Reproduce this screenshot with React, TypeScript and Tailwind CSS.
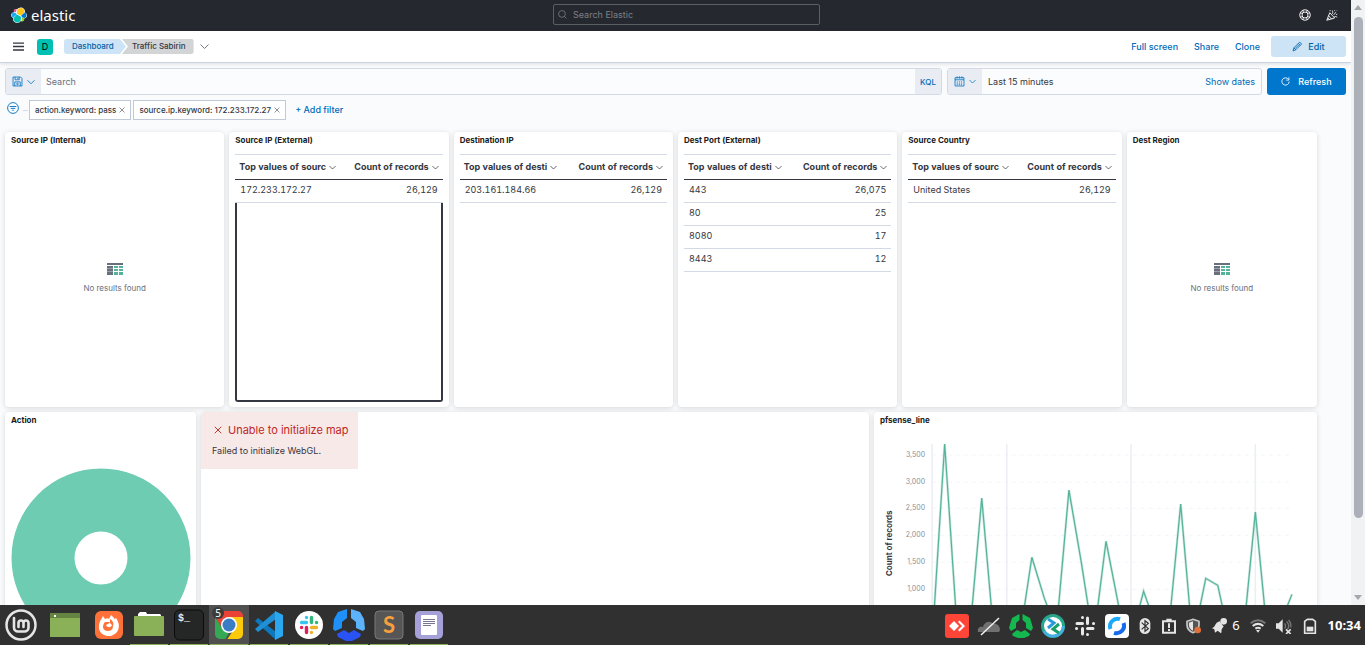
import type { ReactNode } from "react";

interface TablePanel {
  title: string;
  column?: string;
  rows: [string, string][];
  focused?: boolean;
}

const tablePanels: TablePanel[] = [
  { title: "Source IP (Internal)", rows: [] },
  { title: "Source IP (External)", column: "Top values of sourc", rows: [["172.233.172.27", "26,129"]], focused: true },
  { title: "Destination IP", column: "Top values of desti", rows: [["203.161.184.66", "26,129"]] },
  {
    title: "Dest Port (External)",
    column: "Top values of desti",
    rows: [
      ["443", "26,075"],
      ["80", "25"],
      ["8080", "17"],
      ["8443", "12"],
    ],
  },
  { title: "Source Country", column: "Top values of sourc", rows: [["United States", "26,129"]] },
  { title: "Dest Region", rows: [] },
];

const yTicks = [
  { label: "3,500", y: 455 },
  { label: "3,000", y: 482 },
  { label: "2,500", y: 508 },
  { label: "2,000", y: 535 },
  { label: "1,500", y: 562 },
  { label: "1,000", y: 589 },
];

const linePoints =
  "933,642 945.5,444 958,630 970,640 982.5,498 995,640 1008,641 1020,640 1032.5,557 1045,598 1057,630 1069.5,490 1082,563 1094,640 1106.5,541 1119,605 1131,640 1144,591 1156,625 1168,640 1181,504 1193,642 1206,578 1218,585 1230,640 1243,640 1255.5,512 1268,640 1280,624 1292,594";

/* ---------- icons ---------- */

function ElasticLogo() {
  return (
    <svg viewBox="0 0 32 32" className="size-4" aria-hidden="true">
      <path fill="#fff" d="M32 16.800c0-2.700-1.600-5-4.100-6C28.800 5.700 25 1 19.800 1c-3 0-5.700 1.400-7.400 3.800-2.400-1.900-6.200-.1-6.200 3 0 .6.1 1.200.3 1.700C2.300 11 .1 13.200.1 16.200c0 2.700 1.700 5 4.200 6C3 27.500 7 32 12.300 32c3 0 5.700-1.500 7.400-3.900 2.400 1.900 6.100.2 6.100-3 0-.6-.1-1.200-.3-1.700 3.500-.9 6.500-3.300 6.500-6.600z" />
      <path fill="#FEC514" d="M12.600 13.800l7 3.200 7.100-6.200C27.500 5.800 24.300 2 19.800 2c-2.700 0-5.200 1.300-6.700 3.500l-1.200 6.100z" />
      <path fill="#00BFB3" d="M5.300 22.200c-.9 4.800 2.600 8.800 7 8.800 2.700 0 5.200-1.300 6.700-3.600l1.200-6-1.600-3-7-3.200z" />
      <path fill="#F04E98" d="M5.300 9.200l4.800 1.100 1-5.400C8.500 2.900 4.300 5.600 5.300 9.200z" />
      <path fill="#1BA9F5" d="M4.900 10.300C2.700 11.100 1 13.500 1 16s1.500 4.500 3.700 5.300l6.700-6.100-1.200-2.700z" />
      <path fill="#93C90E" d="M20.900 27.400c2.500 1.900 6.800-.7 5.800-4.300l-4.800-1.100z" />
      <path fill="#07C" d="M21.900 20.800l5.200 1.200c2.200-.8 3.900-3.100 3.900-5.600s-1.500-4.500-3.700-5.300l-6.900 6z" />
    </svg>
  );
}

function LineIcon({ className, children }: { className: string; children: ReactNode }) {
  return (
    <svg viewBox="0 0 16 16" fill="none" stroke="currentColor" strokeWidth="1.200" className={className} aria-hidden="true">
      {children}
    </svg>
  );
}

function Chevron({ className }: { className: string }) {
  return (
    <LineIcon className={className}>
      <path strokeWidth="1.700" d="M1 4.500l7 7 7-7" />
    </LineIcon>
  );
}

function Cross({ className }: { className: string }) {
  return (
    <LineIcon className={className}>
      <path strokeWidth="1.800" d="M1.500 1.500l13 13M14.500 1.500l-13 13" />
    </LineIcon>
  );
}

function HelpIcon() {
  return (
    <LineIcon className="size-3">
      <circle cx="8" cy="8" r="7" />
      <circle cx="8" cy="8" r="4" />
      <path d="M5.500 1.700v3M10.500 1.700v3M5.500 11.300v3M10.500 11.300v3M1.700 5.500h3M11.300 5.500h3M1.700 10.500h3M11.300 10.500h3" />
    </LineIcon>
  );
}

function CheerIcon() {
  return (
    <LineIcon className="size-3">
      <path d="M1 15L5 5l6.500 7zM3.500 9l4 4.500M2.500 12l2 2M8 6.500c1.500-1 1-3 .5-4.500M10 8c1.500-1 1.500-3 3.500-3.500M11 10.500c1.500-.8 2.500-.5 4 .5M11 2.500l1-1M5.500 1.500v1.500M13.500 7.500l1.500-.5M14 1.500l.5.500" />
    </LineIcon>
  );
}

function DiskIcon() {
  return (
    <LineIcon className="size-[11px]">
      <path d="M1.500 1.500h11l2 2v11h-13zM4.500 1.500v4h6v-4M8.500 2.500v2M4 14.500v-6h8v6" />
      <circle cx="8" cy="11.500" r="1.200" />
    </LineIcon>
  );
}

function CalendarIcon() {
  return (
    <LineIcon className="size-[11px]">
      <path d="M1.500 2.500h13v12h-13zM1.500 5.500h13M4.500.5v3M8 .5v3M11.500.5v3" />
      <path strokeDasharray="1.500 1.500" d="M4 8.500h9M4 10.500h9M4 12.500h9" />
    </LineIcon>
  );
}

function FilterIcon() {
  return (
    <LineIcon className="size-3">
      <circle cx="8" cy="8" r="7.200" />
      <path d="M3.500 6h9M5 8.500h6M7 11h2" />
    </LineIcon>
  );
}

function PencilIcon() {
  return (
    <LineIcon className="size-[11px]">
      <path d="M1.500 14.500l1.200-4.500 8-8c.8-.8 3.600 2 2.800 2.800l-8 8zM2.700 10l2.800 2.800M9.200 3.500L12 6.300M4.500 11l6-6" />
    </LineIcon>
  );
}

function RefreshIcon() {
  return (
    <LineIcon className="size-[9px]">
      <path strokeWidth="1.500" d="M13.500 4.500A6.500 6.500 0 1 0 14.500 8M14 .5v5H9" />
    </LineIcon>
  );
}

function TableIcon() {
  return (
    <svg viewBox="0 0 16 12" className="h-3 w-4" aria-hidden="true">
      <path fill="#69707D" d="M0 0h16v2H0zM0 3h6v2H0zM0 6h6v2H0zM0 9h6v3H0z" />
      <path fill="#98a0aa" d="M0 5h6v1H0zM0 8h6v1H0z" />
      <path fill="#54B399" d="M7 3h4v2H7zM12 3h4v2h-4zM7 6h4v2H7zM12 6h4v2h-4zM7 9h4v3H7zM12 9h4v3h-4z" />
    </svg>
  );
}

/* ---------- header ---------- */

function TopBar() {
  return (
    <header className="grid h-[31px] shrink-0 grid-cols-[553fr_267fr_531fr] items-center bg-[#25282f] pb-[2px]">
      <a href="#" className="flex items-center gap-1 pl-[11px] font-['Noto_Sans'] text-[15px] leading-5 text-white">
        <ElasticLogo />
        elastic
      </a>
      <label className="flex h-[21px] items-center gap-[6px] rounded-[2px] border border-[#5b5e65] px-1 text-[#8b8e95]">
        <LineIcon className="size-[9px]">
          <circle cx="7" cy="7" r="6" />
          <path d="M11.500 11.500L15 15" />
        </LineIcon>
        <input
          type="text"
          aria-label="Search Elastic"
          placeholder="Search Elastic"
          className="min-w-0 flex-1 bg-transparent text-[9px] outline-none placeholder:text-[#7d8087]"
        />
      </label>
      <div className="flex justify-end gap-[15px] pr-[13px] text-white">
        <button aria-label="Help"><HelpIcon /></button>
        <button aria-label="What's new"><CheerIcon /></button>
      </div>
    </header>
  );
}

function NavBar() {
  return (
    <nav className="relative flex h-8 shrink-0 items-center border-b border-[#c9d3e3] bg-white pr-[5px] pl-[13px] shadow-[0_1px_4px_rgba(0,0,0,0.12)]">
      <button aria-label="Menu" className="text-[#343741]">
        <LineIcon className="size-[11px]">
          <path strokeWidth="2" d="M0 3h16M0 8h16M0 13h16" />
        </LineIcon>
      </button>
      <span className="ml-[13px] flex size-4 items-center justify-center rounded-[3px] bg-[#00bfb3] text-[9px] text-black">D</span>
      <div className="ml-[11px] flex h-[15px] text-[8px] leading-[15px] font-medium">
        <a href="#" className="w-[62px] rounded-l-[3px] bg-[#cce4f5] pl-2 text-[#0061a6] [clip-path:polygon(0_0,56px_0,100%_50%,56px_100%,0_100%)]">
          Dashboard
        </a>
        <span className="-ml-1 rounded-r-[3px] bg-[#d3d4d6] pr-2 pl-[10px] text-[#343741] [clip-path:polygon(0_0,100%_0,100%_100%,0_100%,6px_50%)]">
          Traffic Sabirin
        </span>
      </div>
      <Chevron className="ml-[6px] size-[9px] text-[#69707d]" />
      <div className="ml-auto flex items-center gap-4 text-[9px] font-medium text-[#006bb8]">
        <a href="#">Full screen</a>
        <a href="#">Share</a>
        <a href="#">Clone</a>
        <button className="-ml-[5px] flex h-[21px] w-[75px] items-center justify-center gap-[5px] rounded-[3px] bg-[#cce4f5] text-[#0061a6]">
          <PencilIcon />
          Edit
        </button>
      </div>
    </nav>
  );
}

function QueryBar() {
  return (
    <div className="flex h-[27px] shrink-0 gap-[5px] px-[5px] text-[9px]">
      <div className="flex min-w-0 flex-1 overflow-hidden rounded-[3px] border border-[#d3dae6] bg-[#fbfcfd]">
        <button aria-label="Saved queries" className="flex w-[35px] items-center justify-center gap-1 bg-[#e9edf3] text-[#0071c2]">
          <DiskIcon />
          <Chevron className="size-2" />
        </button>
        <input type="text" aria-label="Search" placeholder="Search" className="min-w-0 flex-1 bg-transparent px-[5px] outline-none placeholder:text-[#69707d]" />
        <button className="w-[26px] bg-[#e9edf3] text-[8px] font-medium text-[#006bb8]">KQL</button>
      </div>
      <div className="flex w-[315px] overflow-hidden rounded-[3px] border border-[#d3dae6] bg-[#fbfcfd]">
        <button aria-label="Quick select" className="flex w-[34px] items-center justify-center gap-1 bg-[#e9edf3] text-[#0071c2]">
          <CalendarIcon />
          <Chevron className="size-[7px]" />
        </button>
        <button className="flex flex-1 items-center justify-between px-[6px] text-[#343741]">
          Last 15 minutes
          <span className="text-[#006bb8]">Show dates</span>
        </button>
      </div>
      <button className="flex w-[79px] items-center justify-center gap-2 rounded-[3px] bg-[#0077cc] font-medium text-white">
        <RefreshIcon />
        Refresh
      </button>
    </div>
  );
}

function FilterBar() {
  const filters = ["action.keyword: pass", "source.ip.keyword: 172.233.172.27"];
  return (
    <div className="mt-[5px] flex h-5 shrink-0 items-center pl-[7px] text-[8px]">
      <button aria-label="Filter options" className="mb-1 text-[#0071c2]">
        <FilterIcon />
      </button>
      <span className="mr-px ml-1 h-px w-[5px] bg-[#d3dae6]" />
      {filters.map((f) => (
        <span key={f} className="mr-[2px] flex h-5 items-center gap-[3px] border border-[#c2c9d6] bg-white px-[5px] font-medium text-[#343741]">
          {f}
          <button aria-label={`Remove ${f}`} className="text-[#535966]">
            <Cross className="size-[6px]" />
          </button>
        </span>
      ))}
      <button className="ml-[7px] text-[9px] font-medium text-[#006bb8]">+ Add filter</button>
    </div>
  );
}

/* ---------- panels ---------- */

function Panel({ title, children }: { title?: string; children?: ReactNode }) {
  return (
    <section className="flex h-[275px] min-w-0 flex-col overflow-hidden rounded-[4px] bg-white shadow-[0_1px_5px_rgba(0,0,0,0.15)]">
      {title && <h2 className="h-[22px] shrink-0 px-[6px] text-[8px] leading-4 font-bold text-[#1a1c21]">{title}</h2>}
      {children}
    </section>
  );
}

function DataPanel({ panel }: { panel: TablePanel }) {
  if (!panel.column) {
    return (
      <Panel title={panel.title}>
        <div className="flex flex-1 flex-col items-center justify-center gap-[7px] pb-1 text-[8px] leading-3 text-[#69707d]">
          <TableIcon />
          No results found
        </div>
      </Panel>
    );
  }

  return (
    <Panel title={panel.title}>
      <div className="flex flex-1 flex-col px-[6px] pb-[5px]">
        <table className="w-full table-fixed border-collapse text-[9px] text-[#343741] tabular-nums">
          <thead className="font-bold">
            <tr className="h-[25px] border-t border-b border-t-[#d3dae6] border-b-[#343741]">
              <th className="p-0 pl-1">
                <div className="flex items-center gap-[3px] whitespace-nowrap">
                  {panel.column}
                  <Chevron className="size-[7px] shrink-0" />
                </div>
              </th>
              <th className="p-0 pr-1">
                <div className="flex items-center justify-end gap-[3px] whitespace-nowrap">
                  Count of records
                  <Chevron className="size-[7px] shrink-0" />
                </div>
              </th>
            </tr>
          </thead>
          <tbody className="leading-4">
            {panel.rows.map(([value, count]) => (
              <tr key={value} className="h-[23px] border-b border-[#d3dae6]">
                <td className="p-0 pb-[2px] pl-[5px]">{value}</td>
                <td className="p-0 pr-[5px] pb-[2px] text-right">{count}</td>
              </tr>
            ))}
          </tbody>
        </table>
        {panel.focused && <div className="flex-1 rounded-b-[3px] border-2 border-t-0 border-[#343741]" />}
      </div>
    </Panel>
  );
}

function DonutChart() {
  return (
    <svg viewBox="0 0 191 191" className="mt-[28px] w-full" aria-label="Action">
      <circle cx="96" cy="96" r="58" fill="none" stroke="#6dccb1" strokeWidth="63" />
    </svg>
  );
}

function LineChart() {
  return (
    <svg viewBox="875 434 442 240" className="w-full" aria-label="Count of records">
      <g stroke="#f3f5f8" strokeWidth="1">
        {yTicks.map((t) => (
          <path key={t.label} strokeDasharray="4 4" d={`M933 ${t.y}H1292`} />
        ))}
        <path stroke="#eceef3" strokeWidth="1.500" d="M933 444V642M1007.500 444V642M1131.500 444V642M1255.500 444V642" />
      </g>
      <g className="fill-[#8b909c] text-[7px]" textAnchor="end">
        {yTicks.map((t) => (
          <text key={t.label} x="926" y={t.y + 2}>{t.label}</text>
        ))}
      </g>
      <text className="fill-[#343741] text-[8px] font-bold" textAnchor="middle" transform="translate(893 543) rotate(-90)">
        Count of records
      </text>
      <polyline points={linePoints} fill="none" stroke="#54b399" strokeOpacity="0.3" strokeWidth="2.500" />
      <polyline points={linePoints} fill="none" stroke="#54b399" strokeWidth="1.200" />
    </svg>
  );
}

function Dashboard() {
  return (
    <main className="mt-3 flex flex-col gap-[5px] pr-[34px] pl-[5px]">
      <div className="grid grid-cols-[219fr_219fr_219fr_219fr_219fr_190fr] gap-x-[5px]">
        {tablePanels.map((p) => (
          <DataPanel key={p.title} panel={p} />
        ))}
      </div>
      <div className="grid grid-cols-[191fr_668fr_443fr] gap-x-[5px]">
        <Panel title="Action">
          <DonutChart />
        </Panel>
        <Panel>
          <div className="w-fit bg-[#f8e9e9] pt-[10px] pr-[9px] pb-[11px] pl-[11px]">
            <p className="flex items-center gap-[6px] pl-[2px] text-[11px] leading-4 text-[#bd271e]">
              <Cross className="size-2" />
              Unable to initialize map
            </p>
            <p className="mt-[6px] text-[9px] leading-[14px] text-[#343741]">Failed to initialize WebGL.</p>
          </div>
        </Panel>
        <Panel title="pfsense_line">
          <LineChart />
        </Panel>
      </div>
    </main>
  );
}

function Scrollbar() {
  return (
    <div className="flex w-[14px] shrink-0 flex-col items-center bg-[#f1f2f4]">
      <svg viewBox="0 0 10 17" className="h-[17px] w-[10px]"><path fill="#a3a7ae" d="M1 10l4-5 4 5z" /></svg>
      <div className="w-[9px] flex-[500] rounded-full bg-[#acb0b9]" />
      <div className="flex-[70]" />
      <svg viewBox="0 0 10 17" className="h-[17px] w-[10px]"><path fill="#a3a7ae" d="M1 7l4 5 4-5z" /></svg>
    </div>
  );
}

/* ---------- desktop taskbar ---------- */

function AppIcon({ children }: { children: ReactNode }) {
  return <svg viewBox="0 0 32 32" className="size-8" aria-hidden="true">{children}</svg>;
}

const apps: { name: string; running: boolean; icon: ReactNode }[] = [
  {
    name: "Firefox",
    running: false,
    icon: (
      <>
        <rect x="2" y="2" width="28" height="28" rx="6" fill="#ff7139" />
        <path fill="#fff" d="M9 9l1-2 2 3c2-1 3-1 4 0l2-4c2 2 3 2 3 4l2-1c7 10 0 18-7 18C6 27 3 17 9 9z" />
        <path fill="#ff7139" d="M12 13l5 0c-1 2-3 2-4 3 1 3 5 3 6 0 2 1 1 6-4 6-6 0-6-6-3-9zM17 10c3 2 4 4 3 7l-3-3z" />
      </>
    ),
  },
  {
    name: "Files",
    running: true,
    icon: (
      <>
        <path fill="#fff" d="M5 7V5l2-2h6l1 2h13l1 1v4H5z" />
        <rect x="1" y="7" width="30" height="20" rx="1" fill="#8bb158" />
      </>
    ),
  },
  {
    name: "Terminal",
    running: true,
    icon: (
      <>
        <rect x="1.500" y="1" width="29" height="30" rx="5" fill="#252626" stroke="#0b0b0b" />
        <text x="5" y="12" fontSize="10" fill="#eee" fontFamily="Liberation Mono" fontWeight="bold">$_</text>
      </>
    ),
  },
  {
    name: "Chrome",
    running: true,
    icon: (
      <>
        <clipPath id="chrome-clip"><rect x="2" y="2" width="28" height="28" rx="5" /></clipPath>
        <g clipPath="url(#chrome-clip)">
          <path fill="#ea4335" d="M0 0h32v10H16L8 17 0 5z" />
          <path fill="#34a853" d="M0 5l9 14 7 5-5 8H0z" />
          <path fill="#fbcb0b" d="M16 8h16v24H13l9-13z" />
        </g>
        <circle cx="16" cy="16" r="8" fill="#fff" />
        <circle cx="16" cy="16" r="6.500" fill="#3a7dc4" />
      </>
    ),
  },
  {
    name: "Code",
    running: true,
    icon: (
      <>
        <path fill="#0d78be" d="M2 12l3-3 18 14v8L2 12z" />
        <path fill="#1f8fd6" d="M2 20L23 2v8L5 23z" />
        <path fill="#2aa7ee" d="M22 2l8 4v21l-8 4z" />
      </>
    ),
  },
  {
    name: "Slack",
    running: true,
    icon: (
      <>
        <circle cx="16" cy="16" r="14" fill="#fff" />
        <g strokeWidth="3.400" strokeLinecap="round">
          <path stroke="#36c5f0" d="M13.500 8.500v.1M8.500 13.500h5" />
          <path stroke="#2eb67d" d="M18.500 8.500v5M23.500 13.500h.1" />
          <path stroke="#ecb22e" d="M18.500 18.500h5M18.500 23.500v.1" />
          <path stroke="#e01e5a" d="M8.500 18.500h.1M13.500 18.500v5" />
        </g>
      </>
    ),
  },
  {
    name: "Hexagon",
    running: true,
    icon: (
      <>
        <path fill="#1e90f8" d="M14 0v9l-5 4v6l-7 3-2-2 1-10 4-7z" />
        <path fill="#5cb3fb" d="M18 0l9 3 4 7 1 10-2 2-7-3v-6l-5-4z" />
        <path fill="#2953f5" d="M4 25l7-4 5 3 5-3 7 4-1 3-8 4h-6l-8-4z" />
      </>
    ),
  },
  {
    name: "Sublime Text",
    running: true,
    icon: (
      <>
        <rect x="2" y="2" width="28" height="28" rx="4" fill="#565656" stroke="#797979" />
        <text x="16" y="24" textAnchor="middle" fontSize="22" fill="#f9a03c" fontFamily="Lato" fontWeight="bold">S</text>
      </>
    ),
  },
  {
    name: "Text Editor",
    running: true,
    icon: (
      <>
        <rect x="2" y="2" width="28" height="28" rx="5" fill="#a5a1d8" />
        <rect x="8" y="6" width="16" height="20" rx="1" fill="#fff" />
        <path stroke="#77758f" d="M10 10.500h12M10 12.500h12M10 14.500h12M10 16.500h8" />
      </>
    ),
  },
];

function TrayIcon({ className, children }: { className: string; children: ReactNode }) {
  return <svg viewBox="0 0 24 24" className={className} aria-hidden="true">{children}</svg>;
}

function Tray() {
  return (
    <div className="ml-auto flex items-center pt-px pr-1 text-white">
      <div className="flex items-center gap-2">
        <TrayIcon className="size-6">
          <rect width="24" height="24" rx="3" fill="#ff4438" />
          <path fill="#fff" d="M9 7l5 5-5 5-5-5zM13 8l1.500-1.500L20 12l-5.500 5.500L13 16l4-4z" />
        </TrayIcon>
        <TrayIcon className="size-6">
          <path fill="#707070" d="M1 18c-1-4 2-6 5-5 1-5 7-7 10-3 3-1 7 1 7 6l-1 2z" />
          <path stroke="#f2f2f2" strokeWidth="1.500" d="M4 21L22 4" />
        </TrayIcon>
        <TrayIcon className="size-6">
          <path fill="#14b84f" d="M10.500 0v6L7 9v5l-5 3-2-3L3 4zM13.500 0v6L17 9v5l5 3 2-3-3-10zM3 20l5-4 4 2 4-2 5 4-1 2-5 2H9l-5-2z" />
        </TrayIcon>
        <TrayIcon className="size-6">
          <circle cx="12" cy="12" r="10.500" fill="#fff" stroke="#27a78c" strokeWidth="3" />
          <path d="M3 17A10.500 10.500 0 0 0 22.500 12" fill="none" stroke="#45aee5" strokeWidth="3" />
          <path fill="none" stroke="#2b9bd8" strokeWidth="3" d="M7 5l6 4-6 5" />
          <path fill="none" stroke="#17a168" strokeWidth="3" d="M18 10l-6 5 6 4" />
        </TrayIcon>
        <TrayIcon className="size-6">
          <g stroke="#e8e8e8" strokeWidth="3" strokeLinecap="round">
            <path d="M9.500 3.500v.1M4 9.500h5.500M14.500 4v5.500M20.500 9.500h.1M14.500 14.500H20M14.500 20.500v.1M3.500 14.500h.1M9.500 14.500v5.500" />
          </g>
        </TrayIcon>
        <TrayIcon className="size-6">
          <rect width="24" height="24" rx="4" fill="#fff" />
          <path fill="none" stroke="#1cabf9" strokeWidth="4" d="M5.500 15A7.500 7.500 0 0 1 15 5.200" />
          <path fill="none" stroke="#1769ef" strokeWidth="4" d="M18.500 9A7.500 7.500 0 0 1 9 18.800" />
        </TrayIcon>
      </div>
      <div className="ml-2 flex items-center gap-2">
        <TrayIcon className="size-4">
          <rect x="4" width="16" height="24" rx="8" fill="#e4e4e4" />
          <path fill="none" stroke="#303030" strokeWidth="1.800" d="M7 7l10 9-5 4V4l5 4-10 9" />
        </TrayIcon>
        <TrayIcon className="size-4">
          <path fill="none" stroke="#e4e4e4" strokeWidth="3" d="M3 5h18v17H3z" />
          <path fill="#e4e4e4" d="M8 1h8v4H8zM10.500 8h3v7h-3zM10.500 16.500h3v3h-3z" />
        </TrayIcon>
        <TrayIcon className="size-4">
          <path fill="#555" stroke="#c9c9c9" strokeWidth="2.500" d="M12 2l9 3v5c0 6-4 10-9 12-5-2-9-6-9-12V5z" />
          <path fill="#e4e4e4" d="M12 5v14c-4-2-6-5-6-9V7z" />
          <circle cx="19" cy="18" r="5" fill="#e0703a" />
        </TrayIcon>
      </div>
      <div className="ml-[10px] flex items-center gap-[5px] font-['Noto_Sans'] text-[13px]">
        <TrayIcon className="size-4">
          <path fill="#e4e4e4" d="M1 15c6 0 4-8 12-10l6 8c-5 4-2 7-4 10l-5-4-4 3-1-5z" />
          <circle cx="19" cy="5" r="5" fill="#e4e4e4" />
        </TrayIcon>
        6
      </div>
      <div className="ml-[10px] flex items-center gap-[10px]">
        <TrayIcon className="size-4">
          <g fill="none" strokeWidth="3">
            <path stroke="#777" d="M1 8c7-6 15-6 22 0" />
            <path stroke="#e4e4e4" d="M4 12c5-4 11-4 16 0M8 16c3-2 5-2 8 0" />
          </g>
          <path fill="#e4e4e4" d="M9 18h6l-3 4z" />
        </TrayIcon>
        <TrayIcon className="size-4">
          <path fill="#e4e4e4" d="M0 8h4l6-6v20l-6-6H0z" />
          <path fill="none" stroke="#777" strokeWidth="2" d="M13 8c2 3 2 5 0 8M16 5c4 5 4 9 1 12M19 3c3 4 4 7 3 11" />
          <path stroke="#e4e4e4" strokeWidth="2.500" d="M15 17l7 7M22 17l-7 7" />
        </TrayIcon>
        <TrayIcon className="size-4">
          <path fill="none" stroke="#e4e4e4" strokeWidth="2.500" d="M4 5l4-3h8l4 3v18H4z" />
          <path fill="#e4e4e4" d="M7 13h10v7H7z" />
        </TrayIcon>
      </div>
      <time className="ml-[10px] font-['Noto_Sans'] text-[13px] font-bold">10:34</time>
    </div>
  );
}

function Taskbar() {
  return (
    <footer className="flex h-10 shrink-0 items-center bg-[#303030]">
      <button aria-label="Menu" className="flex w-[41px] justify-center">
        <svg viewBox="0 0 32 32" className="size-8" fill="none" stroke="#e5e5e5" aria-hidden="true">
          <circle cx="16" cy="16" r="14.500" strokeWidth="2.500" />
          <path strokeWidth="2.600" strokeLinecap="round" d="M9 9v9.500a4 4 0 0 0 4 4h6.500a4 4 0 0 0 4-4V14a2.500 2.500 0 0 0-5 0v4M18.500 14a2.500 2.500 0 0 0-5 0v4" />
        </svg>
      </button>
      <button aria-label="Show desktop" className="flex w-12 justify-center">
        <svg viewBox="0 0 30 24" className="h-6 w-[30px]" aria-hidden="true">
          <path fill="#8bb158" d="M0 0h30v24H0z" />
          <path fill="#668441" d="M0 0h30v5H0z" />
          <path fill="#fff" d="M4 2h2v2H4z" />
        </svg>
      </button>
      {apps.map((app) => (
        <button
          key={app.name}
          aria-label={app.name}
          className={`relative flex h-10 w-10 items-center justify-center ${app.name === "Chrome" ? "bg-[#505050]" : ""}`}
        >
          <AppIcon>{app.icon}</AppIcon>
          {app.name === "Chrome" && (
            <span className="absolute top-[2px] left-[3px] flex size-3 items-center justify-center rounded-full bg-[#3a3a3a] font-['Noto_Sans'] text-[10px] text-white">5</span>
          )}
          {app.running && <span className="absolute inset-x-px bottom-0 h-px bg-[#8bb158]" />}
        </button>
      ))}
      <Tray />
    </footer>
  );
}

export default function App() {
  return (
    <div className="flex h-screen flex-col overflow-hidden bg-[#fafbfd] font-[Inter,sans-serif]">
      <div className="flex min-h-0 flex-1">
        <div className="flex min-w-0 flex-1 flex-col overflow-hidden">
          <TopBar />
          <NavBar />
          <div className="flex flex-col pt-[5px]">
            <QueryBar />
            <FilterBar />
            <Dashboard />
          </div>
        </div>
        <Scrollbar />
      </div>
      <Taskbar />
    </div>
  );
}
